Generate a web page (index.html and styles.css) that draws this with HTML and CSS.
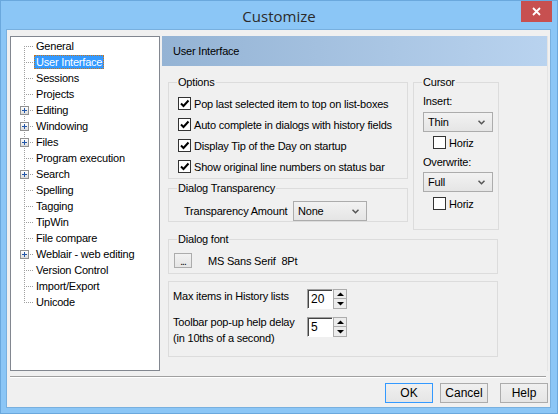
FILE: index.html
```html
<!DOCTYPE html>
<html>

<head>
    <meta charset="utf-8">
    <title>Customize</title>
    <link rel="stylesheet" href="styles.css">
</head>

<body>
    <div class="window">
        <div class="titlebar">
            <span class="title">Customize</span>
            <span class="close">
                <svg width="9" height="9" viewBox="0 0 9 9">
                    <path d="M1 1 L8 8 M8 1 L1 8" stroke="#fff" stroke-width="1.8" />
                </svg>
            </span>
        </div>

        <div class="client">
            <div class="main">
                <div class="tree">
                    <ul>
                        <li><span class="noexp"></span><span class="item">General</span></li>
                        <li><span class="noexp"></span><span class="item selected">User Interface</span></li>
                        <li><span class="noexp"></span><span class="item">Sessions</span></li>
                        <li><span class="noexp"></span><span class="item">Projects</span></li>
                        <li><span class="exp"></span><span class="item">Editing</span></li>
                        <li><span class="exp"></span><span class="item">Windowing</span></li>
                        <li><span class="exp"></span><span class="item">Files</span></li>
                        <li><span class="noexp"></span><span class="item">Program execution</span></li>
                        <li><span class="exp"></span><span class="item">Search</span></li>
                        <li><span class="noexp"></span><span class="item">Spelling</span></li>
                        <li><span class="noexp"></span><span class="item">Tagging</span></li>
                        <li><span class="noexp"></span><span class="item">TipWin</span></li>
                        <li><span class="noexp"></span><span class="item">File compare</span></li>
                        <li><span class="exp"></span><span class="item">Weblair - web editing</span></li>
                        <li><span class="noexp"></span><span class="item">Version Control</span></li>
                        <li><span class="noexp"></span><span class="item">Import/Export</span></li>
                        <li><span class="noexp"></span><span class="item">Unicode</span></li>
                    </ul>
                </div>

                <div class="pane">
                    <div class="pane_header">User Interface</div>
                    <div class="pane_body">

                        <div class="top">
                            <div class="left_col">
                                <fieldset class="options">
                                    <legend>Options</legend>
                                    <div class="check_row"><span class="cb checked"></span><span>Pop last selected item to top on list-boxes</span></div>
                                    <div class="check_row"><span class="cb checked"></span><span>Auto complete in dialogs with history fields</span></div>
                                    <div class="check_row"><span class="cb checked"></span><span>Display Tip of the Day on startup</span></div>
                                    <div class="check_row"><span class="cb checked"></span><span>Show original line numbers on status bar</span></div>
                                </fieldset>

                                <fieldset class="transparency">
                                    <legend>Dialog Transparency</legend>
                                    <div class="trans_row">
                                        <span class="trans_label">Transparency Amount</span>
                                        <div class="select trans_select"><span>None</span><span class="chev"></span></div>
                                    </div>
                                </fieldset>
                            </div>

                            <fieldset class="cursor">
                                <legend>Cursor</legend>
                                <div class="cur_label">Insert:</div>
                                <div class="select cur_select"><span>Thin</span><span class="chev"></span></div>
                                <div class="horiz"><span class="cb"></span><span>Horiz</span></div>
                                <div class="cur_label overwrite">Overwrite:</div>
                                <div class="select cur_select second"><span>Full</span><span class="chev"></span></div>
                                <div class="horiz second"><span class="cb"></span><span>Horiz</span></div>
                            </fieldset>
                        </div>

                        <fieldset class="dlgfont">
                            <legend>Dialog font</legend>
                            <div class="font_row">
                                <span class="dots_btn">...</span>
                                <span class="font_name">MS Sans Serif&nbsp; 8Pt</span>
                            </div>
                        </fieldset>

                        <div class="history">
                            <div class="hist_row">
                                <span class="hist_label">Max items in History lists</span>
                                <div class="spin">
                                    <span class="spin_input">20</span>
                                    <span class="spin_btns"><span class="up"></span><span class="down"></span></span>
                                </div>
                            </div>
                            <div class="hist_row second">
                                <span class="hist_label">Toolbar pop-up help delay<br>(in 10ths of a second)</span>
                                <div class="spin">
                                    <span class="spin_input">5</span>
                                    <span class="spin_btns"><span class="up"></span><span class="down"></span></span>
                                </div>
                            </div>
                        </div>

                    </div>
                </div>
            </div>

            <div class="sep"></div>

            <div class="buttons">
                <span class="btn default">OK</span>
                <span class="btn cancel">Cancel</span>
                <span class="btn">Help</span>
            </div>
        </div>
    </div>
</body>

</html>
```

FILE: styles.css
```css
* {
    box-sizing: border-box;
}

body {
    margin: 0;
    font-family: "Liberation Sans", Arial, sans-serif;
    font-size: 11px;
    letter-spacing: -0.2px;
    color: #000;
}

.window {
    width: 558px;
    height: 414px;
    background: #8bc6f6;
    border: 1px solid #6aa8dd;
}

.titlebar {
    height: 29px;
    display: grid;
    grid-template-columns: 1fr auto 1fr;
}

.title {
    grid-column: 2;
    font-family: "Open Sans", "Noto Sans", sans-serif;
    font-size: 15px;
    letter-spacing: 0;
    color: #2b2b2b;
    line-height: 30px;
}

.close {
    grid-column: 3;
    justify-self: end;
    width: 31px;
    height: 21px;
    margin-right: 5px;
    background: #c75050;
    display: flex;
    align-items: center;
    justify-content: center;
}

.client {
    margin-left: 6px;
    width: 543px;
    height: 377px;
    background: #f0f0f0;
    box-shadow: 0 0 0 1px #78b0df;
}

.main {
    display: flex;
    padding: 6px 0 0 3px;
    gap: 2px;
}

/* tree */

.tree {
    width: 150px;
    height: 335px;
    background: #fff;
    border: 1px solid #828790;
    padding-top: 1px;
}

.tree ul {
    list-style: none;
    margin: 0;
    padding: 0;
    background: repeating-linear-gradient(to bottom, #a0a0a0 0 1px, transparent 1px 2px) no-repeat;
    background-position: 13px 8px;
    background-size: 1px calc(100% - 16px);
}

.tree li {
    display: flex;
    align-items: center;
    height: 16px;
    padding-left: 9px;
    background: repeating-linear-gradient(to right, #a0a0a0 0 1px, transparent 1px 2px) no-repeat;
    background-position: 13px 8px;
    background-size: 10px 1px;
}

.noexp {
    width: 9px;
    height: 9px;
}

.exp {
    width: 9px;
    height: 9px;
    border: 1px solid #919191;
    background:
        linear-gradient(#2457a8, #2457a8) center / 5px 1px no-repeat,
        linear-gradient(#2457a8, #2457a8) center / 1px 5px no-repeat,
        linear-gradient(#ffffff, #dcdcdc);
}

.item {
    margin-left: 5px;
    padding: 0 1px;
    line-height: 12px;
    border: 1px solid transparent;
    white-space: nowrap;
}

.item.selected {
    background: #3399ff;
    color: #fff;
    border: 1px dotted #c7761d;
}

/* right pane */

.pane {
    width: 386px;
    height: 335px;
    border-right: 1px solid #e4e4e4;
}

.pane_header {
    height: 30px;
    line-height: 30px;
    padding-left: 11px;
    background: linear-gradient(to right, #94b3d4, #b9d3ef);
}

.pane_body {
    padding: 10px 0 0 6px;
}

.top {
    display: flex;
    gap: 5px;
    align-items: flex-start;
}

.left_col {
    width: 240px;
}

fieldset {
    margin: 0;
    padding: 0 0 0 8px;
    border: 1px solid #dcdcdc;
    min-width: 0;
}

legend {
    padding: 0 1px;
    line-height: 13px;
}

.options {
    padding-top: 4px;
    padding-bottom: 1px;
}

.check_row {
    display: flex;
    align-items: center;
    height: 21px;
    margin-left: 1px;
    white-space: nowrap;
}

.cb {
    width: 13px;
    height: 13px;
    border: 1px solid #333;
    background: #fff;
    margin-right: 3px;
    flex: none;
}

.cb.checked {
    background: #fff url("data:image/svg+xml;utf8,<svg xmlns='http://www.w3.org/2000/svg' width='11' height='11'><path d='M2 5.5 L4.5 8 L9.5 2.5' fill='none' stroke='black' stroke-width='2'/></svg>") center no-repeat;
}

.transparency {
    margin-top: 3px;
    padding-top: 6px;
}

.trans_row {
    display: flex;
    align-items: center;
    height: 20px;
    margin-left: 7px;
}

.trans_label {
    width: 109px;
    white-space: nowrap;
}

.select {
    display: flex;
    align-items: center;
    justify-content: space-between;
    height: 20px;
    padding: 0 7px 0 4px;
    border: 1px solid #acacac;
    background: linear-gradient(#f2f2f2, #e5e5e5);
}

.chev {
    width: 7px;
    height: 5px;
    background: url("data:image/svg+xml;utf8,<svg xmlns='http://www.w3.org/2000/svg' width='7' height='5'><path d='M0.5 0.8 L3.5 3.8 L6.5 0.8' fill='none' stroke='%23555' stroke-width='1.5'/></svg>") no-repeat;
}

.trans_select {
    width: 74px;
}

.cursor {
    width: 86px;
    padding-top: 6px;
    padding-bottom: 19px;
}

.cur_label {
    line-height: 13px;
    margin-left: 1px;
}

.cur_label.overwrite {
    margin-top: 7px;
}

.cur_select {
    width: 70px;
    margin-top: 4px;
    margin-left: 1px;
}

.cur_select.second {
    margin-top: 3px;
}

.horiz {
    display: flex;
    align-items: center;
    height: 13px;
    margin-top: 4px;
    margin-left: 11px;
}

.horiz.second {
    margin-top: 5px;
}

.dlgfont {
    width: 330px;
    margin-top: 3px;
    padding-top: 7px;
    padding-bottom: 5px;
}

.font_row {
    display: flex;
    align-items: center;
    margin-left: -3px;
}

.dots_btn {
    width: 18px;
    height: 15px;
    border: 1px solid #acacac;
    background: linear-gradient(#f2f2f2, #e5e5e5);
    line-height: 15px;
    text-align: center;
    font-size: 10px;
    letter-spacing: -1px;
}

.font_name {
    margin-left: 16px;
}

.history {
    width: 330px;
    margin-top: 7px;
    border: 1px solid #dcdcdc;
    padding: 6px 0 10px 4px;
}

.hist_row {
    display: flex;
    align-items: flex-start;
}

.hist_row.second {
    margin-top: 5px;
}

.hist_label {
    width: 134px;
    line-height: 16px;
    white-space: nowrap;
}

.spin {
    display: flex;
    margin-top: 1px;
}

.hist_row.second .spin {
    margin-top: 3px;
}

.spin_input {
    width: 26px;
    height: 20px;
    background: #fff;
    border-top: 1px solid #a0a0a0;
    border-left: 1px solid #a0a0a0;
    border-bottom: 1px solid #fff;
    border-right: 1px solid #fff;
    box-shadow: inset 1px 1px 0 #444;
    padding-left: 3px;
    font-size: 12px;
    letter-spacing: 0;
    line-height: 19px;
}

.spin_btns {
    display: flex;
    flex-direction: column;
    width: 14px;
    height: 20px;
}

.spin_btns span {
    height: 10px;
    border: 1px solid #acacac;
    background-color: #ececec;
    background-position: center;
    background-repeat: no-repeat;
}

.spin_btns .up {
    background-image: url("data:image/svg+xml;utf8,<svg xmlns='http://www.w3.org/2000/svg' width='7' height='4'><path d='M0 4 L3.5 0.5 L7 4 Z' fill='black'/></svg>");
}

.spin_btns .down {
    border-top: none;
    background-image: url("data:image/svg+xml;utf8,<svg xmlns='http://www.w3.org/2000/svg' width='7' height='4'><path d='M0 0 L3.5 3.5 L7 0 Z' fill='black'/></svg>");
}

/* bottom */

.sep {
    height: 2px;
    margin: 5px 4px 0 3px;
    border-top: 1px solid #a0a0a0;
    border-bottom: 1px solid #fff;
}

.buttons {
    display: flex;
    justify-content: flex-end;
    margin-top: 5px;
    padding-right: 2px;
}

.btn {
    width: 48px;
    height: 20px;
    border: 1px solid #acacac;
    background: linear-gradient(#f0f0f0, #e5e5e5);
    text-align: center;
    line-height: 18px;
    font-size: 12px;
    letter-spacing: 0;
}

.btn.default {
    border-color: #3399ff;
    margin-right: 7px;
}

.btn.cancel {
    margin-right: 12px;
}
```
